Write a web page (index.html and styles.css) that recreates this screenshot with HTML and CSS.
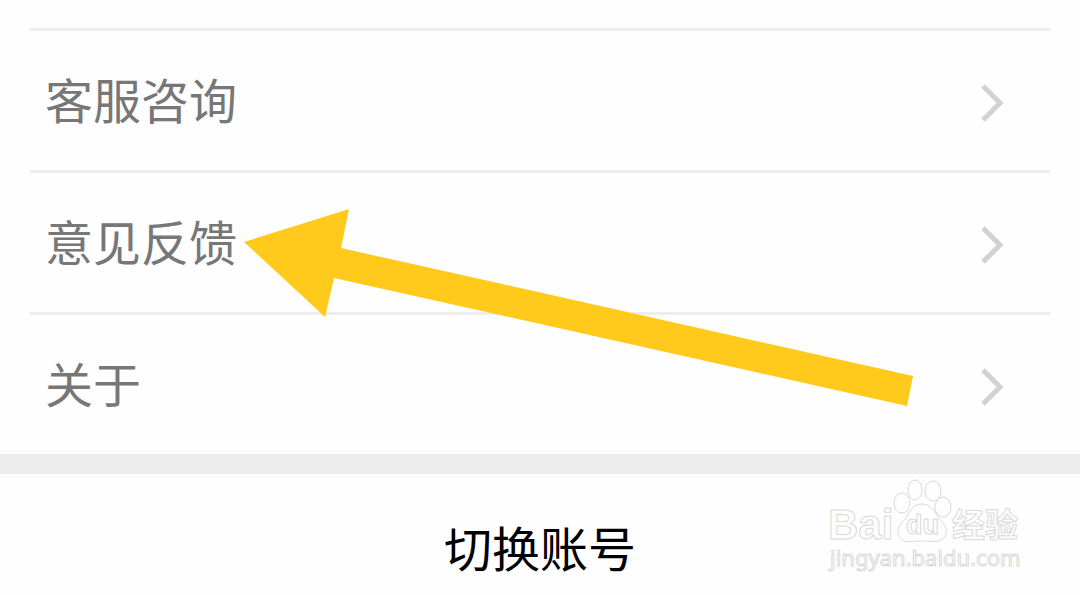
FILE: index.html
```html
<!DOCTYPE html>
<html lang="zh-CN">
<head>
<meta charset="utf-8">
<meta name="viewport" content="width=device-width, initial-scale=1">
<title>设置</title>
<link rel="stylesheet" href="styles.css">
</head>
<body>
<main class="settings">
  <nav class="menu">
    <a class="row" href="#service"><span class="label">客服咨询</span><svg class="chevron" viewBox="0 0 24 40" aria-hidden="true"><path d="M3 3L20 20L3 37"/></svg></a>
    <a class="row" href="#feedback"><span class="label">意见反馈</span><svg class="chevron" viewBox="0 0 24 40" aria-hidden="true"><path d="M3 3L20 20L3 37"/></svg></a>
    <a class="row" href="#about"><span class="label">关于</span><svg class="chevron" viewBox="0 0 24 40" aria-hidden="true"><path d="M3 3L20 20L3 37"/></svg></a>
  </nav>
  <button class="switch" type="button">切换账号</button>
  <svg class="pointer" viewBox="0 0 670 198" aria-hidden="true"><path d="M0 33L105 0L97 39L669 167L663 197L90 69L81 108Z"/></svg>
  <svg class="watermark" viewBox="0 0 200 100" role="img" aria-label="Baidu 经验">
    <text class="brand" x="2" y="63">Bai</text>
    <ellipse cx="76" cy="27" rx="8" ry="10"/>
    <ellipse cx="89" cy="14" rx="7" ry="10"/>
    <ellipse cx="107" cy="15" rx="8" ry="10"/>
    <ellipse cx="117" cy="31" rx="8" ry="10"/>
    <path d="M96 28C88 28 84 34 80 42C76 47 71 50 72 57C74 69 86 65 96 65C106 65 117 68 120 58C122 51 116 46 112 41C108 34 104 28 96 28Z"/>
    <text class="du" x="80" y="58">du</text>
    <text class="experience" x="126" y="61">经验</text>
    <text class="site" x="4" y="90">jingyan.baidu.com</text>
  </svg>
</main>
</body>
</html>
```
FILE: styles.css
```css
* {
  box-sizing: border-box;
}

body {
  margin: 0;
  background: #fefefe;
  font-family: "Noto Sans CJK SC", sans-serif;
}

.settings {
  position: relative;
  padding-top: 28px;
  overflow: hidden;
}

.menu {
  padding: 0 30px;
  border-bottom: 20px solid #ededed;
}

.row {
  display: flex;
  align-items: center;
  justify-content: space-between;
  height: 142px;
  padding: 4px 46px 0 15px;
  border-top: 3px solid #ededed;
  color: #777;
  font-size: 48px;
  line-height: 72px;
  text-decoration: none;
}

.label {
  padding-bottom: 10px;
}

.chevron {
  width: 24px;
  height: 40px;
  fill: none;
  stroke: #d2d2d2;
  stroke-width: 5;
}

.switch {
  display: block;
  width: 100%;
  padding: 36px 0 12px;
  border: 0;
  background: transparent;
  color: #000;
  font-family: inherit;
  font-size: 48px;
  line-height: 72px;
}

.pointer {
  position: absolute;
  top: 209px;
  left: 244px;
  width: 670px;
  height: 198px;
  fill: #ffca1b;
  pointer-events: none;
}

.watermark {
  position: absolute;
  top: 476px;
  right: 54px;
  width: 200px;
  height: 100px;
  fill: #fefefe;
  stroke: #d9d9d9;
  stroke-width: 1;
  pointer-events: none;
}

.brand {
  font: bold 42px "Liberation Sans", sans-serif;
}

.du {
  font: bold 27px "Liberation Sans", sans-serif;
}

.experience {
  font: bold 33px "Noto Sans CJK SC", sans-serif;
}

.site {
  font: 22px "Noto Sans", sans-serif;
}
```
